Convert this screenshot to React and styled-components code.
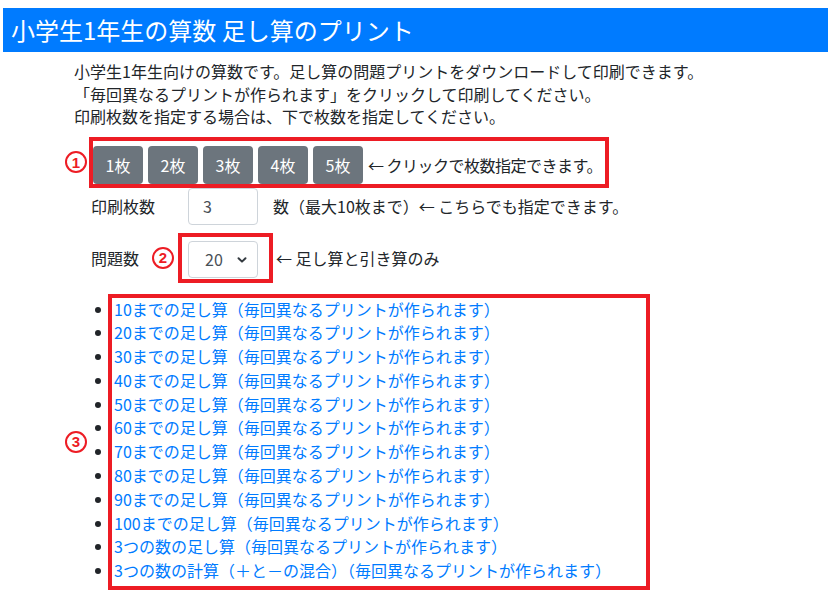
import React from "react";
import styled, { createGlobalStyle } from "styled-components";

const counts = [1, 2, 3, 4, 5];

const links = [
  "10までの足し算（毎回異なるプリントが作られます）",
  "20までの足し算（毎回異なるプリントが作られます）",
  "30までの足し算（毎回異なるプリントが作られます）",
  "40までの足し算（毎回異なるプリントが作られます）",
  "50までの足し算（毎回異なるプリントが作られます）",
  "60までの足し算（毎回異なるプリントが作られます）",
  "70までの足し算（毎回異なるプリントが作られます）",
  "80までの足し算（毎回異なるプリントが作られます）",
  "90までの足し算（毎回異なるプリントが作られます）",
  "100までの足し算（毎回異なるプリントが作られます）",
  "3つの数の足し算（毎回異なるプリントが作られます）",
  "3つの数の計算（＋と－の混合）（毎回異なるプリントが作られます）",
];

const App = () => {
  return (
    <Page>
      <GlobalStyle />
      <Header>小学生1年生の算数 足し算のプリント</Header>

      <Main>
        <Intro>
          小学生1年生向けの算数です。足し算の問題プリントをダウンロードして印刷できます。
          <br />
          「毎回異なるプリントが作られます」をクリックして印刷してください。
          <br />
          印刷枚数を指定する場合は、下で枚数を指定してください。
        </Intro>

        <Row>
          <Mark>1</Mark>
          <ButtonsBox>
            {counts.map((n) => (
              <CountButton key={n}>{n}枚</CountButton>
            ))}
            <Note $tight>← クリックで枚数指定できます。</Note>
          </ButtonsBox>
        </Row>

        <FieldRow>
          <Label $width={97}>印刷枚数</Label>
          <NumberInput type="text" defaultValue="3" />
          <Note $gap={15}>数（最大10枚まで）← こちらでも指定できます。</Note>
        </FieldRow>

        <FieldRow $top={8}>
          <Label $width={61}>問題数</Label>
          <Mark>2</Mark>
          <SelectBox>
            <SelectWrap>
              <Select defaultValue="20">
                <option value="10">10</option>
                <option value="20">20</option>
                <option value="30">30</option>
              </Select>
              <Chevron width="10" height="8" viewBox="0 0 10 8">
                <path
                  d="M1.5 2.2 L5 5.6 L8.5 2.2"
                  fill="none"
                  stroke="#343a40"
                  strokeWidth="2"
                  strokeLinecap="round"
                  strokeLinejoin="round"
                />
              </Chevron>
            </SelectWrap>
          </SelectBox>
          <Note $gap={3}>← 足し算と引き算のみ</Note>
        </FieldRow>

        <ListRow>
          <Mark>3</Mark>
          <ListBox>
            <List>
              {links.map((text) => (
                <Item key={text}>
                  <Link href="#">{text}</Link>
                </Item>
              ))}
            </List>
          </ListBox>
        </ListRow>
      </Main>
    </Page>
  );
};

export default App;

// Styled Components
const GlobalStyle = createGlobalStyle`
  html, body {
    margin: 0;
    background: #fff;
  }
  body {
    font-family: "Noto Sans CJK JP", "Noto Sans", sans-serif;
    color: #212529;
  }
`;

const RED = "#ed1c24";

const Page = styled.div`
  width: 835px;
  height: 596px;
  overflow: hidden;
  padding: 8px 7px 0 3px;
  box-sizing: border-box;
`;

const Header = styled.h1`
  margin: 0;
  height: 44px;
  line-height: 44px;
  padding-left: 8px;
  background-color: #007bff;
  color: #fff;
  font-size: 24px;
  font-weight: 400;
  white-space: nowrap;
`;

const Main = styled.div`
  padding-left: 62px;
  margin-top: 8px;
  font-size: 16px;
`;

const Intro = styled.p`
  margin: 0;
  padding-left: 9px;
  line-height: 22.5px;
  white-space: nowrap;
`;

const Row = styled.div`
  display: flex;
  align-items: center;
  margin-top: 9px;
`;

const Mark = styled.span`
  flex: none;
  width: 22px;
  height: 22px;
  box-sizing: border-box;
  border: 2.8px solid ${RED};
  border-radius: 50%;
  color: ${RED};
  font-family: "Liberation Sans", sans-serif;
  font-weight: bold;
  font-size: 15px;
  line-height: 1;
  display: flex;
  align-items: center;
  justify-content: center;
`;

const ButtonsBox = styled.div`
  display: flex;
  align-items: center;
  gap: 5px;
  border: 4px solid ${RED};
  padding: 5px 3px 0 0;
  margin-left: 2px;
`;

const CountButton = styled.button`
  width: 50px;
  height: 38px;
  border: none;
  border-radius: 4px;
  background-color: #6c757d;
  color: #fff;
  font-family: inherit;
  font-size: 16px;
  padding: 0;
  cursor: pointer;
`;

const Note = styled.span`
  margin-left: ${(p) => (p.$gap !== undefined ? p.$gap : 0)}px;
  letter-spacing: ${(p) => (p.$tight ? "-0.5px" : "normal")};
  white-space: nowrap;
`;

const FieldRow = styled.div`
  display: flex;
  align-items: center;
  margin-top: ${(p) => p.$top || 0}px;
  padding-left: 26px;
`;

const Label = styled.span`
  width: ${(p) => p.$width}px;
  flex: none;
`;

const NumberInput = styled.input`
  width: 70px;
  height: 37px;
  box-sizing: border-box;
  border: 1px solid #ced4da;
  border-radius: 4px;
  padding: 0 0 0 14px;
  font-family: inherit;
  font-size: 16px;
  color: #495057;
  outline: none;
`;

const SelectBox = styled.div`
  border: 4px solid ${RED};
  padding: 4px 11px 1px 6px;
  margin-left: 4px;
`;

const SelectWrap = styled.div`
  position: relative;
  width: 70px;
  height: 37px;
`;

const Select = styled.select`
  appearance: none;
  width: 100%;
  height: 100%;
  box-sizing: border-box;
  border: 1px solid #ced4da;
  border-radius: 4px;
  background: #fff;
  padding: 0 0 0 16px;
  font-family: inherit;
  font-size: 16px;
  color: #495057;
  outline: none;
`;

const Chevron = styled.svg`
  position: absolute;
  right: 11px;
  top: 15px;
  pointer-events: none;
`;

const ListRow = styled.div`
  display: flex;
  align-items: center;
  margin-top: 11px;
`;

const ListBox = styled.div`
  width: 542px;
  box-sizing: border-box;
  border: 4px solid ${RED};
  padding: 0 0 3px 2px;
  margin-left: 21px;
`;

const List = styled.ul`
  margin: 0;
  padding: 0;
  list-style: disc outside;
`;

const Item = styled.li`
  line-height: 23.8px;
  white-space: nowrap;
`;

const Link = styled.a`
  color: #007bff;
  text-decoration: none;
`;
